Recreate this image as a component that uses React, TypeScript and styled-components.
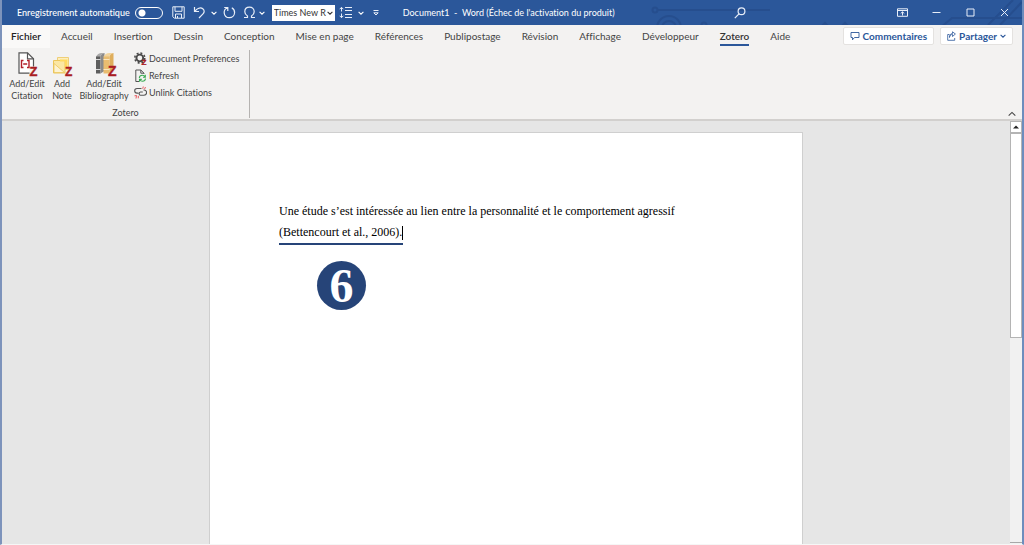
import React from "react";
import styled, { createGlobalStyle, css } from "styled-components";

const blue = "#2b579a";
const ui = `Lato, "Noto Sans", sans-serif`;

const GlobalStyle = createGlobalStyle`
  *, *::before, *::after { box-sizing: border-box; }
  body { margin: 0; background: #fafafa; font-family: ${ui}; font-variant-ligatures: none; }
  button, input, select { font: inherit; font-variant-ligatures: none; color: inherit; margin: 0; }
`;

const Window = styled.div`
  display: flex;
  flex-direction: column;
  min-height: 100vh;
  border-left: 2px solid #7d93bb;
  border-right: 2px solid #6d8dbd;
  border-bottom: 1px solid #f6f6f6;
  font-size: 10px;
  line-height: 12px;
  color: #444;
`;

/* Title bar */
const TitleBar = styled.header`
  position: relative;
  display: flex;
  align-items: center;
  height: 25px;
  padding-left: 15px;
  background: ${blue};
  color: #fff;
  font-size: 9px;
  overflow: hidden;
`;

const Circuit = styled.svg`
  position: absolute;
  top: 0;
  right: 0;
  width: 374px;
  height: 25px;
`;

const AutoSave = styled.label`
  display: flex;
  align-items: center;
  gap: 5px;
  font-weight: 500;
  white-space: nowrap;
`;

const Toggle = styled.input`
  appearance: none;
  width: 28px;
  height: 12px;
  border: 1px solid #fff;
  border-radius: 6px;
  background: radial-gradient(circle at 6px 5px, #fff 3px, transparent 4px);
`;

const QuickAccess = styled.nav`
  display: flex;
  align-items: center;
  padding-left: 5px;
  flex: none;
`;

const BareButton = styled.button`
  display: flex;
  align-items: center;
  justify-content: center;
  padding: 0;
  border: 0;
  background: transparent;
`;

const ToolButton = styled(BareButton)<{ $w: number }>`
  width: ${(p) => p.$w}px;
  height: 24px;
`;

const FontPicker = styled.span`
  display: flex;
  align-items: center;
  width: 63px;
  height: 16px;
  margin-left: 6px;
  background: #fff;
  color: #333;
  position: relative;
  svg { position: absolute; right: 2px; pointer-events: none; }
`;

const FontSelect = styled.select`
  appearance: none;
  width: 100%;
  height: 16px;
  padding: 0 0 0 2px;
  border: 0;
  background: transparent;
  line-height: 16px;
`;

const DocTitle = styled.h1`
  position: relative;
  margin: 0 0 0 16px;
  font-size: 9px;
  font-weight: 400;
  line-height: 12px;
  white-space: pre;
`;

const SearchArea = styled.div`
  position: relative;
  display: flex;
  flex: 1;
  justify-content: center;
  padding-right: 20px;
`;

const WindowButtons = styled.div`
  position: relative;
  display: flex;
  padding-right: 1px;
`;

/* Ribbon */
const TabRow = styled.nav`
  display: flex;
  align-items: center;
  gap: 1px;
  height: 23px;
  padding-right: 9px;
  background: #f3f2f1;
`;

const Tab = styled.a<{ $kind?: "file" | "active" }>`
  position: relative;
  display: flex;
  align-items: center;
  height: 23px;
  padding: 0 10px 2px;
  color: #444;
  text-decoration: none;
  white-space: nowrap;
  ${(p) =>
    p.$kind === "file" &&
    css`
      padding: 0 9px 2px;
      background: #faf9f8;
      color: #222;
      font-weight: 600;
    `}
  ${(p) =>
    p.$kind === "active" &&
    css`
      color: #333;
      font-weight: 600;
      &::after {
        content: "";
        position: absolute;
        left: 10px;
        right: 10px;
        bottom: 2px;
        height: 2px;
        background: ${blue};
      }
    `}
`;

const TabActions = styled.div`
  display: flex;
  gap: 6px;
  margin-left: auto;
  padding-bottom: 2px;
`;

const ActionButton = styled.button`
  display: flex;
  align-items: center;
  gap: 3px;
  height: 18px;
  padding: 0 6px;
  border: 1px solid #e4e2e0;
  border-radius: 2px;
  background: #fff;
  color: ${blue};
  font-weight: 700;
  white-space: nowrap;
`;

const Ribbon = styled.div`
  display: flex;
  justify-content: space-between;
  align-items: flex-end;
  padding: 2px 3px 1px 0;
  background: #f3f2f1;
  border-bottom: 2px solid #d2d0ce;
  font-size: 9px;
`;

const Group = styled.section`
  display: flex;
  flex-direction: column;
  width: 248px;
  border-right: 1px solid #b5b3b1;
`;

const GroupBody = styled.div`
  display: flex;
  padding-left: 6px;
`;

const GroupLabel = styled.h2`
  margin: 6px 0 0;
  font-size: 9px;
  font-weight: 400;
  line-height: 10px;
  text-align: center;
`;

const LargeButton = styled(BareButton)<{ $w: number }>`
  flex: none;
  flex-direction: column;
  justify-content: flex-start;
  width: ${(p) => p.$w}px;
  line-height: 12px;
  text-align: center;
  white-space: nowrap;
`;

const SmallButtons = styled.div`
  display: flex;
  flex-direction: column;
  padding-left: 4px;
`;

const SmallButton = styled(BareButton)`
  justify-content: flex-start;
  gap: 2px;
  height: 17px;
  white-space: nowrap;
`;

const Collapse = styled(BareButton)`
  width: 14px;
  height: 8px;
`;

/* Document area */
const Workspace = styled.div`
  display: flex;
  flex: 1;
  background: #e6e6e6;
`;

const Canvas = styled.main`
  display: flex;
  flex: 1;
  justify-content: center;
  padding-top: 11px;
`;

const Page = styled.article`
  width: 100%;
  max-width: 594px;
  padding: 68px 69px 0;
  border: 1px solid #cfcfcf;
  border-bottom: 0;
  background: #fff;
  color: #000;
  font-family: "Liberation Serif", serif;
  font-size: 12px;
  line-height: 21px;
`;

const Paragraph = styled.p`
  margin: 0;
`;

const Citation = styled.span`
  display: inline-block;
  border-bottom: 2px solid #264478;
`;

const Caret = styled.span`
  display: inline-block;
  width: 1px;
  height: 14px;
  vertical-align: middle;
  background: #000;
`;

const StepBadge = styled.div`
  display: flex;
  align-items: center;
  justify-content: center;
  width: 49px;
  height: 49px;
  margin: 16px 0 0 38px;
  border-radius: 50%;
  background: #264478;
  color: #fff;
  font-size: 48px;
  font-weight: 700;
  line-height: 48px;
`;

const ScrollBar = styled.div`
  display: flex;
  flex-direction: column;
  width: 12px;
  background: #f1f1f1;
`;

const ScrollButton = styled(BareButton)`
  height: 12px;
  border: 1px solid #b4b4b4;
  background: #fff;
`;

const ScrollTrack = styled.div`
  flex: 1;
`;

const ScrollThumb = styled.div`
  height: 50%;
  border: 1px solid #b4b4b4;
  background: #fff;
`;

const ScrollEnd = styled.div`
  height: 2px;
  border-top: 1px solid #a8a8a8;
`;

const Chevron = ({ color = "#fff", up = false, size = 6 }: { color?: string; up?: boolean; size?: number }) => (
  <svg width={size} height={size} viewBox="0 0 6 6" fill="none" stroke={color} strokeWidth={up ? 0.8 : 1.1}>
    <path d={up ? "M.5 4.300 3 1.800l2.500 2.500" : "M.6 1.800 3 4.200l2.400-2.400"} />
  </svg>
);

const stroke = { fill: "none", stroke: "#e8eef8", strokeWidth: 1 } as const;

const SaveIcon = () => (
  <svg width="13" height="13" viewBox="0 0 13 13" {...stroke}>
    <path d="M.8.8h11.400v11.400H2.300L.8 10.700zM3 .8v4.500h7V.8M3.500 12V8h6v4M5.500 10v2" />
  </svg>
);
const UndoIcon = () => (
  <svg width="13" height="13" viewBox="0 0 13 13" {...stroke} strokeWidth={1.2}>
    <path d="M1.500 1v4.500H6M1.700 5.300C4 2.500 7.500 1 9.800 2.700c2 1.600 1.600 3.800.2 5.200L6 12" />
  </svg>
);
const RedoIcon = () => (
  <svg width="13" height="13" viewBox="0 0 13 13" {...stroke} strokeWidth={1.2}>
    <path d="M1.200 1.500h3.600V5M4.500 1.800C2 2.800 1 4.800 1.200 7c.3 2.800 2.500 4.700 5.200 4.700s5-2.100 5.200-4.900c.1-2-.9-3.900-2.800-5" />
  </svg>
);
const OmegaIcon = () => (
  <svg width="13" height="13" viewBox="0 0 13 13" {...stroke} strokeWidth={1.2}>
    <path d="M1 11.500h3.500V10C2.500 8.800 1.800 7.500 1.800 5.700 1.800 3 3.700 1.200 6.500 1.200S11.200 3 11.200 5.700c0 1.800-.7 3.100-2.700 4.300v1.500H12" />
  </svg>
);
const SpacingIcon = () => (
  <svg width="13" height="13" viewBox="0 0 13 13" {...stroke}>
    <path d="M2.500 1.500v4M2.500 7.500v4M.7 3.200l1.800-1.900 1.800 1.900M.7 9.800l1.800 1.900 1.800-1.900M6 1.500h7M6 4.500h7M6 8.500h7M6 11.500h7" />
  </svg>
);
const CustomizeIcon = () => (
  <svg width="8" height="8" viewBox="0 0 8 8" {...stroke}>
    <path d="M1.500 1.500h5M1.800 3.800 4 6l2.200-2.200z" />
  </svg>
);
const SearchIcon = () => (
  <svg width="12" height="12" viewBox="0 0 12 12" {...stroke} strokeWidth={1.2}>
    <circle cx="7.500" cy="4.300" r="3.400" />
    <path d="M5 6.800.8 11.200" />
  </svg>
);
const RibbonOptionsIcon = () => (
  <svg width="11" height="9" viewBox="0 0 11 9" {...stroke}>
    <path d="M.5.8h10v7.500H.5zM.5 2.500h10M5.500 7.500V4M3.700 5.500l1.800-1.700 1.800 1.700" />
  </svg>
);
const MinimizeIcon = () => (
  <svg width="9" height="9" viewBox="0 0 9 9" {...stroke}>
    <path d="M.5 4.500h8" />
  </svg>
);
const MaximizeIcon = () => (
  <svg width="9" height="9" viewBox="0 0 9 9" {...stroke}>
    <path d="M1 1h7v7H1z" />
  </svg>
);
const CloseIcon = () => (
  <svg width="9" height="9" viewBox="0 0 9 9" {...stroke}>
    <path d="m1 1 7 7M8 1 1 8" />
  </svg>
);
const CommentIcon = () => (
  <svg width="10" height="10" viewBox="0 0 10 10" fill="none" stroke={blue} strokeWidth=".9">
    <path d="M1 1.500h8v5H4.500L2.500 8.800V6.500H1z" />
  </svg>
);
const ShareIcon = () => (
  <svg width="9" height="10" viewBox="0 0 9 10" fill="none" stroke={blue}>
    <path d="M2.500 3.500H.7v5.800h7V7M2.500 6.500c.2-2.300 1.300-3 3-3V5.500L8.400 3 5.500.8v1.700C3.500 2.600 2.500 4 2.500 6.500z" strokeWidth=".8" />
  </svg>
);

const ZMark = ({ x, y, size }: { x: number; y: number; size: number }) => (
  <text x={x} y={y} fontSize={size} fontFamily="Liberation Sans, sans-serif" fontWeight="700" fill="#a91c22" stroke="#a91c22" strokeWidth=".4">
    Z
  </text>
);

const CitationIcon = () => (
  <svg width="24" height="28" viewBox="0 0 24 28" fill="none">
    <path d="M4 2.800h8.500l6 6V23.200H4z" fill="#fff" stroke="#555" strokeWidth="1.200" />
    <path d="M12.500 2.800v6h6" stroke="#555" strokeWidth="1.200" />
    <path d="M14.500 16.500h8v10h-8z" fill="#f3f2f1" />
    <path d="M8.500 10.500h-2v7h2M12 10.500h2v7h-2M8.200 14h4" stroke="#b3202a" strokeWidth="1.400" />
    <ZMark x={14.500} y={26} size={13} />
  </svg>
);
const NoteIcon = () => (
  <svg width="24" height="28" viewBox="0 0 24 28" fill="none">
    <path d="M7.500 7.500h11v12h-11z" fill="#fdeebd" stroke="#efcf78" />
    <path d="M3.500 10.500h11.500v12.500H3.500z" fill="#fbe7a4" stroke="#ecc65c" />
    <path d="M10 9.500h7.500v9H15v-7h-5z" fill="#ffd95e" />
    <path d="M4 13.500 14.500 22.500H4z" fill="#fdf3d2" stroke="#ecc65c" strokeWidth=".8" />
    <ZMark x={15} y={26} size={12} />
  </svg>
);
const BooksIcon = () => (
  <svg width="26" height="28" viewBox="0 0 26 28" fill="none">
    <path d="M5 7c1-2.500 3-4 6-4h3c-3 .5-4.500 2-4.500 4z" fill="#a8a8a8" />
    <path d="M5 6.500h4.500v17H5z" fill="#5e5e5e" />
    <path d="M9.500 7C10 4.500 11.500 3.300 13.500 3v18l-4 2.500z" fill="#8a8a8a" />
    <path d="M5 9.500h4.500M5 19.500h4.500" stroke="#d8d8d8" />
    <path d="M12.500 7c1-2.500 3-4 6-4h4.500c-3 .5-4.500 2-4.500 4z" fill="#f2d49c" />
    <path d="M12.500 6.500h6v17h-6z" fill="#e9bd70" />
    <path d="M18.500 7c.5-2.500 2-3.700 4-4v14.500l-4 6z" fill="#dfae5c" />
    <path d="M12.500 9.500h6M12.500 19.500h6" stroke="#fbe6bd" />
    <ZMark x={17} y={26} size={14} />
  </svg>
);
const GearIcon = () => (
  <svg width="13" height="13" viewBox="0 0 13 13" fill="none">
    <circle cx="5.800" cy="6" r="3.400" stroke="#4a4a4a" strokeWidth="1.900" />
    <circle cx="5.800" cy="6" r="5" stroke="#4a4a4a" strokeWidth="1.500" strokeDasharray="2 1.927" />
    <ZMark x={7.500} y={12.500} size={8} />
  </svg>
);
const RefreshIcon = () => (
  <svg width="13" height="14" viewBox="0 0 13 14" fill="none">
    <path d="M5 12.500H1.800V1h5L10 4.200V5M6.800 1v3.200H10" stroke="#555" />
    <path d="M5.300 9c.2-1.700 1.500-2.700 3-2.700 1.200 0 2.200.6 2.700 1.500M11.300 5.800v2.400H9M11.500 9.500c-.2 1.700-1.500 2.700-3 2.700-1.200 0-2.200-.6-2.700-1.500M5.500 12.800v-2.400h2.300" stroke="#3aaa52" strokeWidth="1.100" />
  </svg>
);
const UnlinkIcon = () => (
  <svg width="13" height="13" viewBox="0 0 13 13" fill="none">
    <path d="M7.500 2.500H3a2.300 2.300 0 0 0 0 4.600h1.500M9.500 4h.5a2.600 2.600 0 0 1 0 5.200H6.500C4.700 9 4.700 6.300 6.500 6h2.300" stroke="#555" strokeWidth="1.100" />
    <path d="M8.700 2.800 9.300.5M10.500 3.200 11.500 1M2 12.500l.5-3M4.300 12.300V9.800M.5 9.800l2-.3" stroke="#e5484f" strokeWidth=".9" />
  </svg>
);

const tabs: { label: string; kind?: "file" | "active" }[] = [
  { label: "Fichier", kind: "file" },
  { label: "Accueil" },
  { label: "Insertion" },
  { label: "Dessin" },
  { label: "Conception" },
  { label: "Mise en page" },
  { label: "Références" },
  { label: "Publipostage" },
  { label: "Révision" },
  { label: "Affichage" },
  { label: "Développeur" },
  { label: "Zotero", kind: "active" },
  { label: "Aide" },
];

const largeButtons = [
  { lines: ["Add/Edit", "Citation"], width: 38, icon: <CitationIcon /> },
  { lines: ["Add", "Note"], width: 32, icon: <NoteIcon /> },
  { lines: ["Add/Edit", "Bibliography"], width: 52, icon: <BooksIcon /> },
];

const smallButtons = [
  { label: "Document Preferences", icon: <GearIcon /> },
  { label: "Refresh", icon: <RefreshIcon /> },
  { label: "Unlink Citations", icon: <UnlinkIcon /> },
];

export default function App() {
  return (
    <>
      <GlobalStyle />
      <Window>
        <TitleBar>
          <Circuit viewBox="0 0 374 25" fill="none" stroke="#264e8e" strokeWidth="2" aria-hidden="true">
            <circle cx="7" cy="10" r="2.500" />
            <path d="M10 10h112" />
            <circle cx="21" cy="28" r="12" />
            <circle cx="21" cy="28" r="7" />
            <circle cx="56" cy="25" r="2.500" />
            <path d="m172 28 5-5 5 5m10 0 5-5 5 5M292 28l12-10h70M340 25l25-25M352 25l22-23" />
          </Circuit>
          <AutoSave>
            Enregistrement automatique
            <Toggle type="checkbox" role="switch" />
          </AutoSave>
          <QuickAccess aria-label="Accès rapide">
            <ToolButton $w={22} aria-label="Enregistrer"><SaveIcon /></ToolButton>
            <ToolButton $w={20} aria-label="Annuler"><UndoIcon /></ToolButton>
            <ToolButton $w={8} aria-label="Options d'annulation"><Chevron /></ToolButton>
            <ToolButton $w={24} aria-label="Répéter"><RedoIcon /></ToolButton>
            <ToolButton $w={16} aria-label="Symbole"><OmegaIcon /></ToolButton>
            <ToolButton $w={8} aria-label="Autres symboles"><Chevron /></ToolButton>
            <FontPicker>
              <FontSelect aria-label="Police">
                <option>Times New R</option>
              </FontSelect>
              <Chevron color="#333" />
            </FontPicker>
            <ToolButton $w={22} aria-label="Interligne"><SpacingIcon /></ToolButton>
            <ToolButton $w={8} aria-label="Options d'interligne"><Chevron /></ToolButton>
            <ToolButton $w={22} aria-label="Personnaliser"><CustomizeIcon /></ToolButton>
          </QuickAccess>
          <DocTitle>{"Document1  -  Word (Échec de l'activation du produit)"}</DocTitle>
          <SearchArea>
            <ToolButton $w={22} aria-label="Rechercher"><SearchIcon /></ToolButton>
          </SearchArea>
          <WindowButtons>
            <ToolButton $w={34} aria-label="Affichage du ruban"><RibbonOptionsIcon /></ToolButton>
            <ToolButton $w={34} aria-label="Réduire"><MinimizeIcon /></ToolButton>
            <ToolButton $w={34} aria-label="Agrandir"><MaximizeIcon /></ToolButton>
            <ToolButton $w={34} aria-label="Fermer"><CloseIcon /></ToolButton>
          </WindowButtons>
        </TitleBar>

        <TabRow>
          {tabs.map((t) => (
            <Tab key={t.label} href="#" $kind={t.kind}>{t.label}</Tab>
          ))}
          <TabActions>
            <ActionButton><CommentIcon />Commentaires</ActionButton>
            <ActionButton><ShareIcon />Partager<Chevron color={blue} /></ActionButton>
          </TabActions>
        </TabRow>

        <Ribbon>
          <Group>
            <GroupBody>
              {largeButtons.map((b) => (
                <LargeButton key={b.lines[1]} $w={b.width}>
                  {b.icon}
                  <span>{b.lines[0]}<br />{b.lines[1]}</span>
                </LargeButton>
              ))}
              <SmallButtons>
                {smallButtons.map((b) => (
                  <SmallButton key={b.label}>{b.icon}{b.label}</SmallButton>
                ))}
              </SmallButtons>
            </GroupBody>
            <GroupLabel>Zotero</GroupLabel>
          </Group>
          <Collapse aria-label="Réduire le ruban"><Chevron color="#444" up size={8} /></Collapse>
        </Ribbon>

        <Workspace>
          <Canvas>
            <Page>
              <Paragraph>
                Une étude s’est intéressée au lien entre la personnalité et le comportement agressif{" "}
                <Citation>(Bettencourt et al., 2006).<Caret /></Citation>
              </Paragraph>
              <StepBadge>6</StepBadge>
            </Page>
          </Canvas>
          <ScrollBar>
            <ScrollButton aria-label="Défiler vers le haut">
              <svg width="6" height="4" viewBox="0 0 6 4"><path d="M0 3.500 3 .5l3 3z" fill="#222" /></svg>
            </ScrollButton>
            <ScrollTrack><ScrollThumb /></ScrollTrack>
            <ScrollEnd />
          </ScrollBar>
        </Workspace>
      </Window>
    </>
  );
}
